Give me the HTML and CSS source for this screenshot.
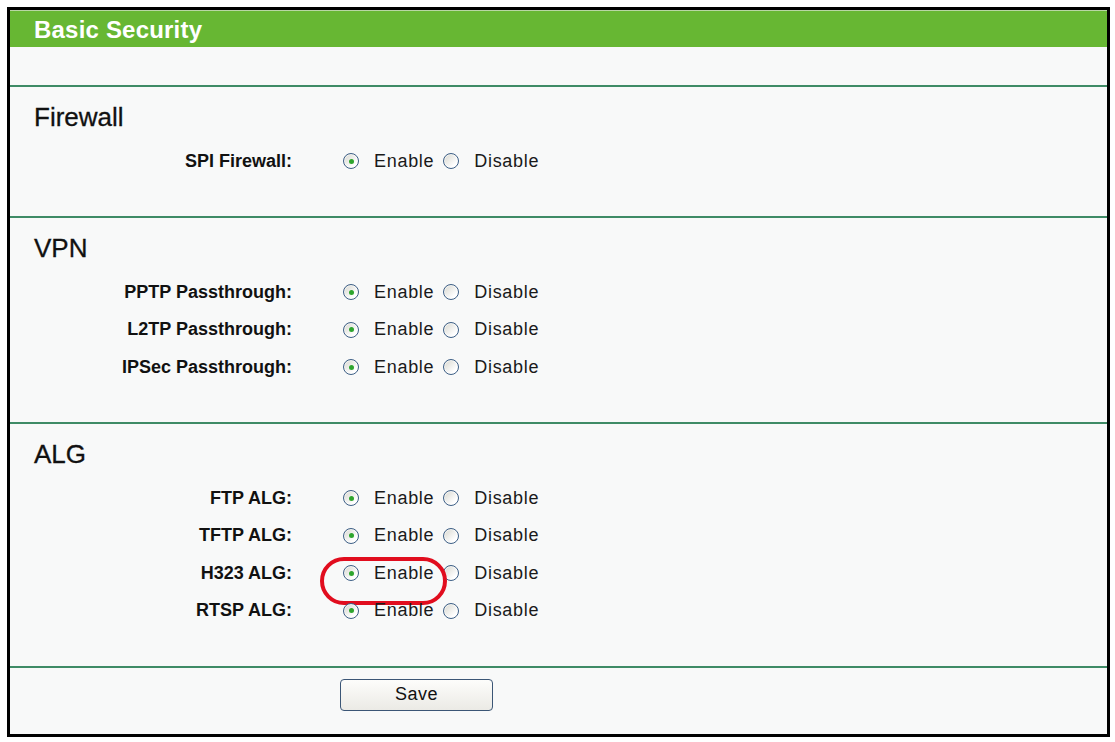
FILE: index.html
```html
<!DOCTYPE html>
<html lang="en">
<head>
  <meta charset="UTF-8">
  <title>Basic Security</title>
  <link rel="stylesheet" href="styles.css">
</head>
<body>
  <div class="frame">
    <div class="title-bar">Basic Security</div>
    <div class="spacer"></div>
    <div class="sep"></div>

    <!-- Firewall -->
    <div class="section">
      <div class="section-title">Firewall</div>
      <div class="row">
        <div class="label">SPI Firewall:</div>
        <div class="value">
          <input type="radio" name="spi" checked><span class="opt">Enable</span>
          <input type="radio" name="spi"><span class="opt">Disable</span>
        </div>
      </div>
    </div>
    <div class="sep"></div>

    <!-- VPN -->
    <div class="section">
      <div class="section-title">VPN</div>
      <div class="row">
        <div class="label">PPTP Passthrough:</div>
        <div class="value">
          <input type="radio" name="pptp" checked><span class="opt">Enable</span>
          <input type="radio" name="pptp"><span class="opt">Disable</span>
        </div>
      </div>
      <div class="row">
        <div class="label">L2TP Passthrough:</div>
        <div class="value">
          <input type="radio" name="l2tp" checked><span class="opt">Enable</span>
          <input type="radio" name="l2tp"><span class="opt">Disable</span>
        </div>
      </div>
      <div class="row">
        <div class="label">IPSec Passthrough:</div>
        <div class="value">
          <input type="radio" name="ipsec" checked><span class="opt">Enable</span>
          <input type="radio" name="ipsec"><span class="opt">Disable</span>
        </div>
      </div>
    </div>
    <div class="sep"></div>

    <!-- ALG -->
    <div class="section">
      <div class="section-title">ALG</div>
      <div class="row">
        <div class="label">FTP ALG:</div>
        <div class="value">
          <input type="radio" name="ftp" checked><span class="opt">Enable</span>
          <input type="radio" name="ftp"><span class="opt">Disable</span>
        </div>
      </div>
      <div class="row">
        <div class="label">TFTP ALG:</div>
        <div class="value">
          <input type="radio" name="tftp" checked><span class="opt">Enable</span>
          <input type="radio" name="tftp"><span class="opt">Disable</span>
        </div>
      </div>
      <div class="row marked">
        <div class="label">H323 ALG:</div>
        <div class="value">
          <input type="radio" name="h323" checked><span class="opt">Enable</span>
          <input type="radio" name="h323"><span class="opt">Disable</span>
        </div>
        <div class="highlight"></div>
      </div>
      <div class="row">
        <div class="label">RTSP ALG:</div>
        <div class="value">
          <input type="radio" name="rtsp" checked><span class="opt">Enable</span>
          <input type="radio" name="rtsp"><span class="opt">Disable</span>
        </div>
      </div>
    </div>
    <div class="sep"></div>

    <div class="footer">
      <div></div>
      <div><button class="save-btn">Save</button></div>
    </div>
  </div>
</body>
</html>
```

FILE: styles.css
```css
body {
  margin: 0;
  padding: 7px 0 0 7px;
  background: #fff;
  font-family: "Liberation Sans", Arial, sans-serif;
  color: #111;
}
.frame {
  width: 1103px;
  box-sizing: border-box;
  border: 3px solid #000;
  background: #f8f9f9;
}
.title-bar {
  height: 37px;
  line-height: 37px;
  padding-left: 24px;
  background: #67b733;
  border-top: 1px solid #b9d6a4;
  box-sizing: border-box;
  color: #fff;
  font-size: 24px;
  font-weight: bold;
  letter-spacing: 0.2px;
}
.spacer {
  height: 38px;
}
.sep {
  height: 2px;
  background: #3f8b66;
}
.section {
  padding: 14.5px 0 36px;
}
.section-title {
  height: 30px;
  line-height: 30px;
  margin-bottom: 11px;
  padding-left: 24px;
  font-size: 26px;
  color: #111;
  -webkit-text-stroke: 0.3px #111;
}
.row {
  position: relative;
  display: grid;
  grid-template-columns: 282px auto;
  height: 37.5px;
  align-items: center;
}
.label {
  text-align: right;
  font-size: 18px;
  font-weight: bold;
  color: #111;
}
.value {
  display: flex;
  align-items: center;
  padding-left: 51px;
  font-size: 18px;
  letter-spacing: 0.7px;
  color: #1a1a1a;
}
.value input[type="radio"] {
  appearance: none;
  -webkit-appearance: none;
  width: 16px;
  height: 16px;
  margin: 0 15px 0 0;
  border: 1px solid #3d5f86;
  border-radius: 50%;
  background: linear-gradient(135deg, #d6d6ce, #ffffff 75%);
  box-shadow: inset 0 0 0 1px rgba(255, 255, 255, 0.6);
  position: relative;
}
.value input[type="radio"]:checked::after {
  content: "";
  position: absolute;
  left: 4.5px;
  top: 4.5px;
  width: 5px;
  height: 5px;
  border-radius: 50%;
  background: #2ea52e;
}
.opt {
  margin-right: 9px;
}
/* red oval marking the H323 option */
.highlight {
  position: absolute;
  left: 310px;
  top: 2px;
  width: 127px;
  height: 48px;
  box-sizing: border-box;
  border: 4px solid #e10d1e;
  border-radius: 24px;
}
.footer {
  display: grid;
  grid-template-columns: 282px auto;
  padding: 11px 0 23.5px;
}
.save-btn {
  margin-left: 48px;
  width: 153px;
  height: 32px;
  border: 1px solid #3b5676;
  border-radius: 4px;
  background: linear-gradient(#fdfdfb, #ebeae5);
  font-family: "Liberation Sans", Arial, sans-serif;
  font-size: 18px;
  letter-spacing: 0.5px;
  color: #111;
  padding: 0;
}
```
